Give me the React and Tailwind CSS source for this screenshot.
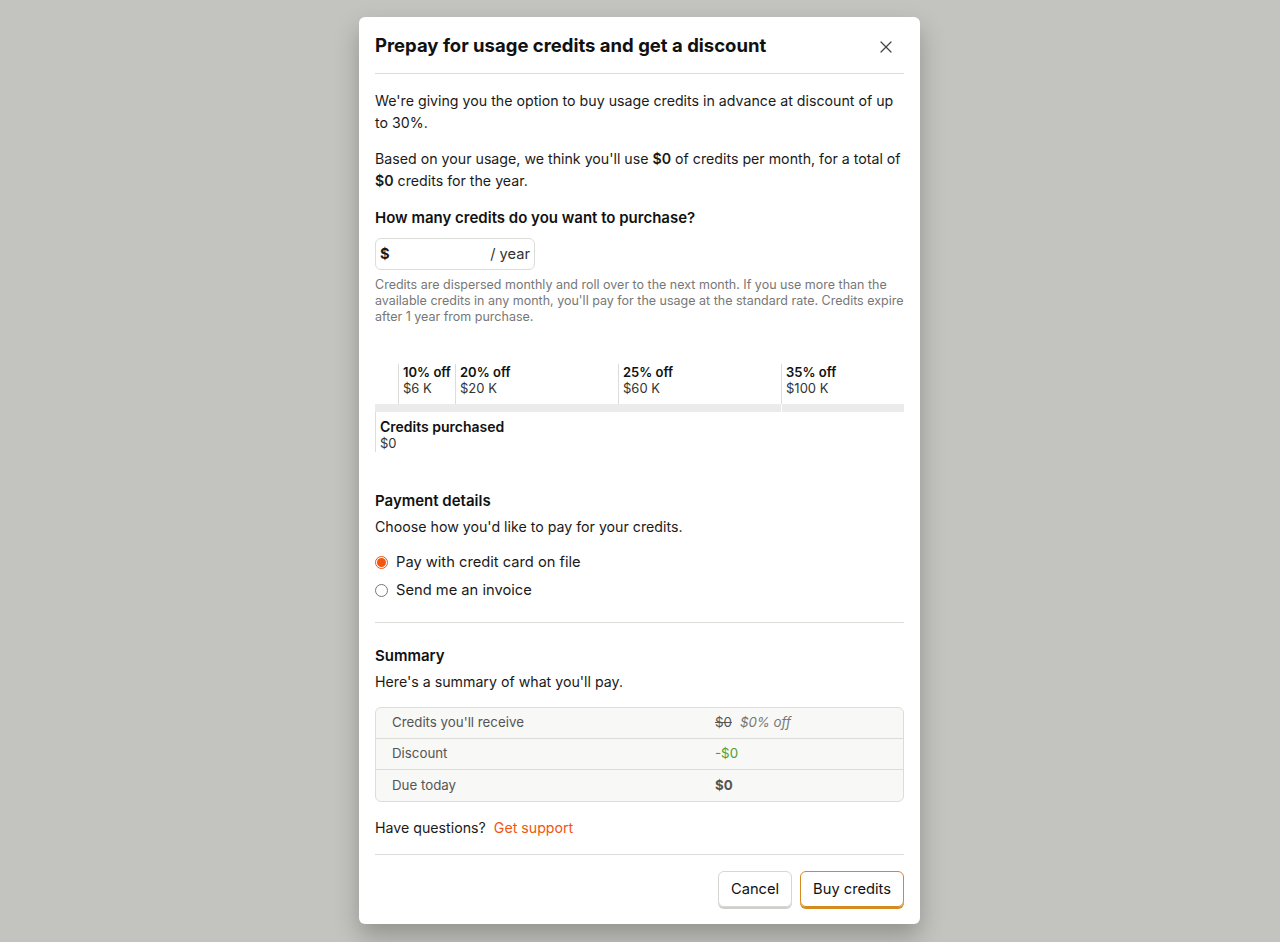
import { X } from "lucide-react"

const tiers = [
  { w: "w-[57px]", label: "10% off", amount: "$6 K" },
  { w: "w-[163px]", label: "20% off", amount: "$20 K" },
  { w: "w-[163px]", label: "25% off", amount: "$60 K" },
  { w: "flex-1", label: "35% off", amount: "$100 K" },
]

const TierChart = () => (
  <div className="mt-[39px]">
    <div className="flex h-[40px]">
      <div className="w-[23px]" />
      {tiers.map(t => (
        <div key={t.label} className={`${t.w} border-l border-[#dcdcd8] pl-1 text-[13px] leading-4`}>
          <div className="font-semibold text-[#111]">{t.label}</div>
          <div className="text-[#333]">{t.amount}</div>
        </div>
      ))}
    </div>
    <div className="flex h-2">
      <div className="w-[406px] bg-[#ebebeb]" />
      <div className="w-px bg-white" />
      <div className="flex-1 bg-[#ebebeb]" />
    </div>
    <div className="h-[40px] border-l border-[#dcdcd8] pl-1 text-[13px] leading-4 pt-[7px]">
      <div className="font-semibold text-[14px] text-[#111]">Credits purchased</div>
      <div className="text-[#333]">$0</div>
    </div>
  </div>
)

const Radio = ({ checked, label }) => (
  <label className="flex items-center gap-2 h-[28px] text-[14.7px] text-[#1a1a1a]">
    {checked ? (
      <span className="w-[13px] h-[13px] rounded-full border border-[#f0560f] flex items-center justify-center">
        <span className="w-[9px] h-[9px] rounded-full bg-[#f0560f]" />
      </span>
    ) : (
      <span className="w-[13px] h-[13px] rounded-full border border-[#777]" />
    )}
    {label}
  </label>
)

const SummaryRow = ({ label, children, last }) => (
  <div className={`grid grid-cols-[323px_1fr] items-center h-[31px] px-4 text-[13.3px] text-[#555] ${last ? "" : "border-b border-[#dcdcd8]"}`}>
    <div>{label}</div>
    <div>{children}</div>
  </div>
)

export default function App() {
  return (
    <div className="min-h-[942px] bg-[#c3c4bf] pt-[17px] font-['Inter',sans-serif] text-[#1a1a1a]">
      <div className="ml-[359px] w-[561px] bg-white rounded-md shadow-[0_12px_24px_rgba(0,0,0,0.25)] px-4 pt-[14px] pb-[17px]">
        <div className="flex items-center justify-between h-[28px] mb-[14px]">
          <h1 className="text-[18.5px] font-bold leading-7 text-[#111]">Prepay for usage credits and get a discount</h1>
          <button className="text-[#444] mr-[8px] mt-[3px]"><X size={20} strokeWidth={1.5} /></button>
        </div>
        <div className="border-t border-[#dcdcd8]" />

        <p className="mt-4 text-[14.2px] leading-[22px]">
          We're giving you the option to buy usage credits in advance at discount of up to 30%.
        </p>
        <p className="mt-[14px] text-[14.2px] leading-[22px]">
          Based on your usage, we think you'll use <b className="font-semibold">$0</b> of credits per month, for a total of <b className="font-semibold">$0</b> credits for the year.
        </p>

        <h2 className="mt-[15px] text-[15px] leading-[22px] font-semibold text-[#111]">How many credits do you want to purchase?</h2>
        <div className="mt-[9px] w-[160px] h-[32px] border border-[#dcdcd8] rounded-md flex items-center justify-between px-[4px] text-[14.7px]">
          <span className="font-bold">$</span>
          <span className="text-[#333]">/ year</span>
        </div>
        <p className="mt-[7px] text-[12.5px] leading-4 text-[#777]">
          Credits are dispersed monthly and roll over to the next month. If you use more than the available credits in any month, you'll pay for the usage at the standard rate. Credits expire after 1 year from purchase.
        </p>

        <TierChart />

        <h2 className="mt-[38px] text-[15px] leading-[22px] font-semibold text-[#111]">Payment details</h2>
        <p className="mt-1 text-[14.2px] leading-[22px]">Choose how you'd like to pay for your credits.</p>
        <div className="mt-[10px] flex flex-col">
          <Radio checked label="Pay with credit card on file" />
          <Radio label="Send me an invoice" />
        </div>

        <div className="mt-[18px] border-t border-[#dcdcd8]" />

        <h2 className="mt-[22px] text-[15px] leading-[22px] font-semibold text-[#111]">Summary</h2>
        <p className="mt-1 text-[14.2px] leading-[22px]">Here's a summary of what you'll pay.</p>
        <div className="mt-[14px] border border-[#dcdcd8] rounded-md bg-[#f8f8f6] overflow-hidden">
          <SummaryRow label="Credits you'll receive">
            <span className="line-through">$0</span>
            <span className="ml-2 italic text-[#777]">$0% off</span>
          </SummaryRow>
          <SummaryRow label="Discount">
            <span className="text-[#4fa12c]">-$0</span>
          </SummaryRow>
          <SummaryRow label="Due today" last>
            <span className="font-bold">$0</span>
          </SummaryRow>
        </div>

        <p className="mt-[15px] text-[14.2px] leading-[22px]">
          Have questions? <a className="ml-1 text-[#f0560f]">Get support</a>
        </p>

        <div className="mt-[15px] border-t border-[#dcdcd8]" />

        <div className="mt-4 flex justify-end gap-2">
          <button className="h-[36px] px-3 rounded-md border border-[#d6d6d2] shadow-[0_2px_0_#cfcfcb] text-[14.7px] text-[#111]">Cancel</button>
          <button className="h-[36px] px-3 rounded-md border border-[#d48a1d] shadow-[0_2px_0_#d48a1d] text-[14.7px] text-[#111]">Buy credits</button>
        </div>
      </div>
    </div>
  )
}
